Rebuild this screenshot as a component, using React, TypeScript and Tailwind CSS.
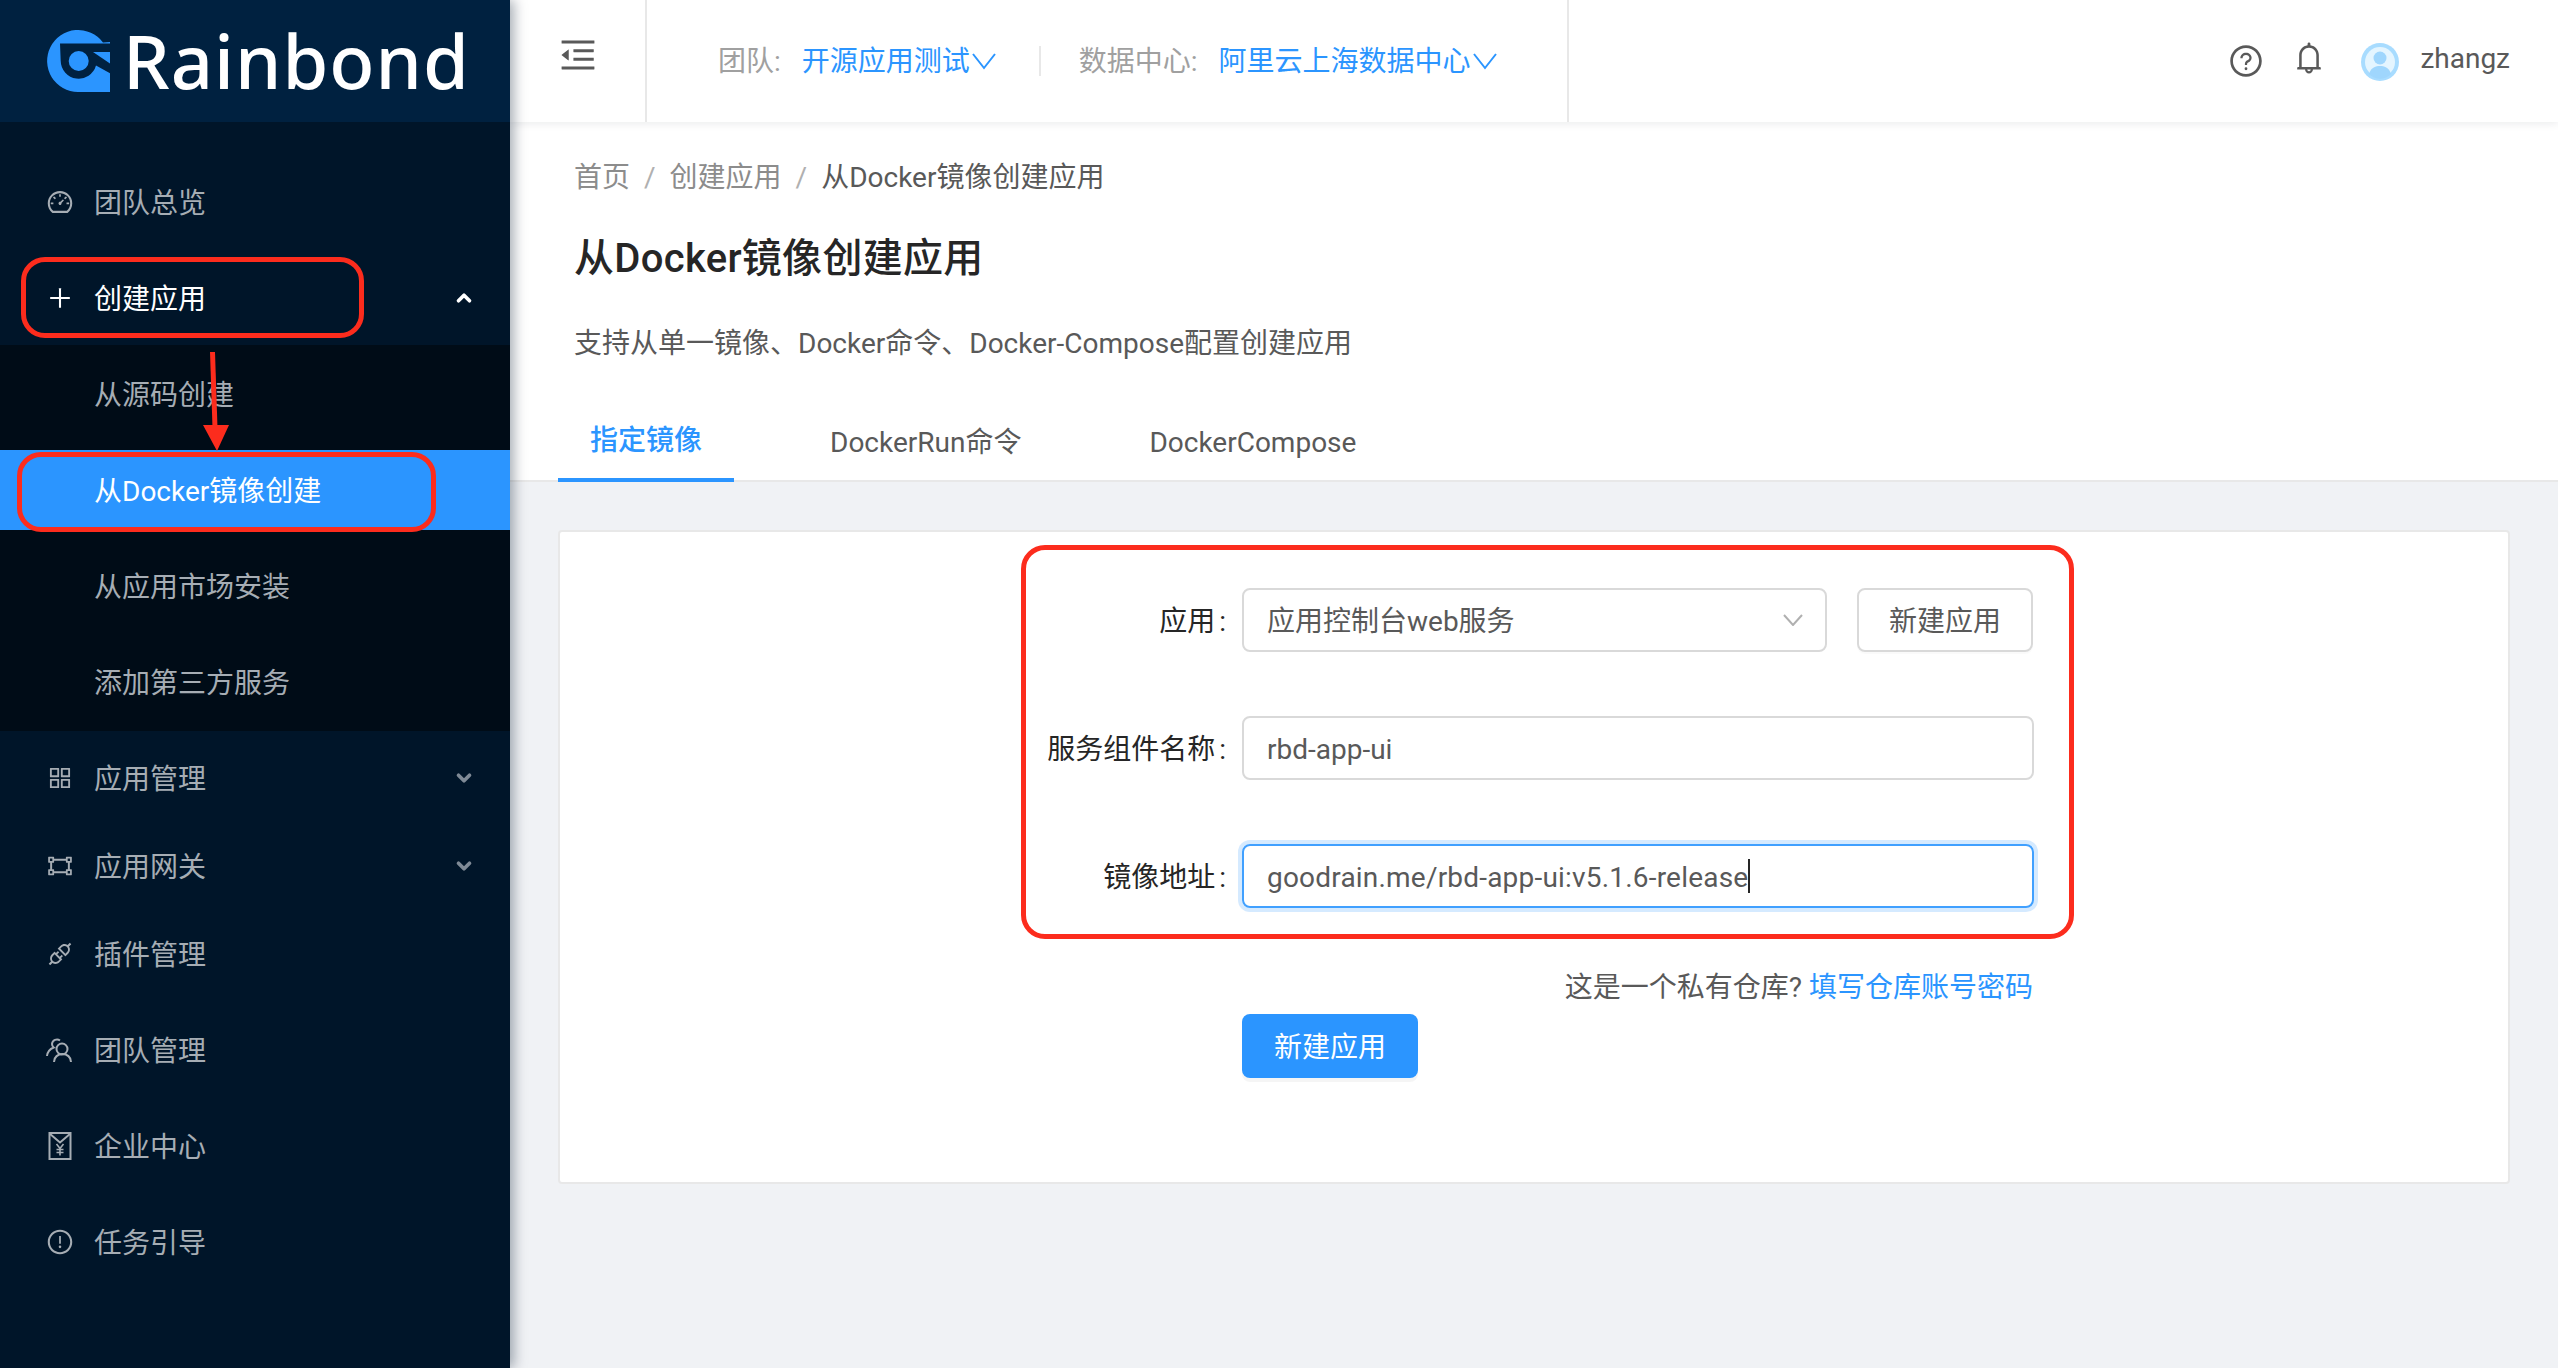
import React from 'react';
import { AiOutlineDashboard, AiOutlinePlus, AiOutlineAppstore, AiOutlineGateway, AiOutlineApi, AiOutlineExclamationCircle, AiOutlineQuestionCircle, AiOutlineBell, AiOutlineMenuFold } from 'react-icons/ai';
import { FiChevronDown, FiChevronUp } from 'react-icons/fi';

const Logo = () => (
  <svg width="63" height="62" viewBox="0 0 63 62" className="shrink-0">
    <path d="M56 12.5A31 31 0 1 0 31 62H63V12Z" fill="#2b95ff" />
    <path d="M13 13.5H63V43.3L49 35.6A18 18 0 0 1 13.7 31Z" fill="#002140" />
    <path d="M46 22H63V33.5Z" fill="#2b95ff" />
    <circle cx="31.7" cy="31" r="10" fill="#2b95ff" />
  </svg>
);

const TeamIcon = () => (
  <svg width="28" height="28" viewBox="0 0 28 28" fill="none" stroke="currentColor" strokeWidth="2">
    <circle cx="16" cy="13" r="5.5" />
    <path d="M8 26c0-5 4-8 8.5-8s8.5 3 8.5 8" />
    <path d="M14 4.5A5 5 0 0 0 6 8c0 1.5.7 2.7 1.7 3.5C4 13 1.5 15.5 1 20" />
  </svg>
);

const EnterpriseIcon = () => (
  <svg width="28" height="28" viewBox="0 0 28 28" fill="none" stroke="currentColor" strokeWidth="2">
    <path d="M3.5 1H24.5V27H3.5Z" />
    <path d="M3.5 1.5L14 10.5L24.5 1.5" />
    <path d="M10.5 12L14 16.5L17.5 12M14 16.5V23.5M10.5 17.5H17.5M10.5 20.5H17.5" strokeWidth="1.6" />
  </svg>
);

const NavItem = ({ icon, label, arrow, active }: { icon: React.ReactNode; label: string; arrow?: 'up' | 'down'; active?: boolean }) => (
  <div className={`flex items-center h-[80px] pl-[46px] pr-[35px] ${active ? 'text-white' : 'text-[#a6adb4]'}`}>
    <span className="w-[28px] flex justify-center text-[34px]">{icon}</span>
    <span className="ml-[20px] flex-1 pt-[3px]">{label}</span>
    {arrow === 'up' && <FiChevronUp className="text-[22px] stroke-[4]" />}
    {arrow === 'down' && <FiChevronDown className="text-[22px] stroke-[4] text-[#7f8a96]" />}
  </div>
);

const SubItem = ({ label, selected }: { label: string; selected?: boolean }) => (
  <div className={`flex items-center h-[80px] pl-[94px] pt-[3px] ${selected ? 'bg-[#2b95ff] text-white' : 'text-[#a6adb4]'}`}>{label}</div>
);

const Select = () => (
  <div className="w-[585px] h-[64px] border-2 border-[#d9d9d9] rounded-[8px] flex items-center justify-between pl-[23px] pr-[22px] text-[#595959]">
    <span className="pt-[3px]">应用控制台web服务</span>
    <svg width="20" height="12" viewBox="0 0 20 12" fill="none" stroke="#b0b0b0" strokeWidth="2"><path d="M1 1l9 10 9-10" /></svg>
  </div>
);

const FormRow = ({ label, children }: { label: string; children: React.ReactNode }) => (
  <div className="flex items-center h-[64px] mb-[64px]">
    <div className="w-[682px] text-right pr-[16px] pt-[3px] text-[#262626]">{label}<span className="ml-[4px]">:</span></div>
    {children}
  </div>
);

export default function App() {
  return (
    <div className="relative flex h-[1368px] w-[2558px] overflow-hidden bg-[#f0f2f5] text-[28px] font-['Roboto','Noto_Sans_CJK_SC',sans-serif]">
      <aside className="w-[510px] shrink-0 bg-[#001529] shadow-[4px_0_12px_rgba(0,21,41,0.35)] z-10">
        <div className="h-[122px] bg-[#002140] flex items-center pl-[47px]">
          <Logo />
          <span className="ml-[13px] text-white text-[74px] leading-none font-medium tracking-[1px] font-['Noto_Sans',sans-serif]">Rainbond</span>
        </div>
        <div className="pt-[40px]">
          <NavItem icon={<AiOutlineDashboard />} label="团队总览" />
          <div className="h-[16px]" />
          <NavItem icon={<AiOutlinePlus />} label="创建应用" arrow="up" active />
          <div className="mt-[7px] mb-[7px] bg-[#000c17] pt-[9px] pb-[9px] flex flex-col gap-[16px]">
            <SubItem label="从源码创建" />
            <SubItem label="从Docker镜像创建" selected />
            <SubItem label="从应用市场安装" />
            <SubItem label="添加第三方服务" />
          </div>
          <NavItem icon={<AiOutlineAppstore />} label="应用管理" arrow="down" />
          <div className="h-[8px]" />
          <NavItem icon={<AiOutlineGateway />} label="应用网关" arrow="down" />
          <div className="h-[8px]" />
          <NavItem icon={<AiOutlineApi />} label="插件管理" />
          <div className="h-[16px]" />
          <NavItem icon={<TeamIcon />} label="团队管理" />
          <div className="h-[16px]" />
          <NavItem icon={<EnterpriseIcon />} label="企业中心" />
          <div className="h-[16px]" />
          <NavItem icon={<AiOutlineExclamationCircle />} label="任务引导" />
        </div>
      </aside>

      <div className="flex-1 flex flex-col min-w-0">
        <header className="h-[122px] bg-white shadow-[0_2px_8px_rgba(0,21,41,0.08)] flex items-stretch z-[1]">
          <div className="w-[137px] flex items-center justify-center border-r-2 border-[#e8e8e8] pb-[13px]">
            <AiOutlineMenuFold className="text-[42px] text-[#595959]" />
          </div>
          <div className="w-[922px] border-r-2 border-[#e8e8e8] flex items-center pl-[71px]">
            <span className="text-[#a0a0a0] pt-[2px]">团队:</span>
            <span className="ml-[21px] text-[#2b95ff] pt-[2px]">开源应用测试</span>
            <svg width="24" height="20" viewBox="0 0 24 20" fill="none" stroke="#2b95ff" strokeWidth="2" className="ml-[2px]"><path d="M1 3l11 14L23 3" /></svg>
            <div className="ml-[43px] h-[30px] w-[2px] bg-[#e8e8e8]" />
            <span className="ml-[38px] text-[#a0a0a0] pt-[2px]">数据中心:</span>
            <span className="ml-[21px] text-[#2b95ff] pt-[2px]">阿里云上海数据中心</span>
            <svg width="24" height="20" viewBox="0 0 24 20" fill="none" stroke="#2b95ff" strokeWidth="2" className="ml-[2px]"><path d="M1 3l11 14L23 3" /></svg>
          </div>
          <div className="flex-1 flex items-center justify-end pr-[48px] text-[#595959]">
            <AiOutlineQuestionCircle className="text-[36px]" />
            <AiOutlineBell className="ml-[27px] mb-[6px] text-[36px]" />
            <svg width="38" height="38" viewBox="0 0 38 38" className="ml-[34px] mt-[2px]">
              <circle cx="19" cy="19" r="19" fill="#a8dcff" />
              <circle cx="19" cy="19" r="15" fill="#e4f5ff" />
              <circle cx="19" cy="15" r="6.5" fill="#9fd6fd" />
              <path d="M8 31c2-7 7-8 11-8s9 1 11 8a15 15 0 0 1-22 0z" fill="#9fd6fd" />
            </svg>
            <span className="ml-[21px] mb-[4px]">zhangz</span>
          </div>
        </header>

        <section className="h-[360px] bg-white border-b-2 border-[#e8e8e8] flex flex-col pl-[64px]">
          <div className="mt-[36px] flex items-center h-[40px] text-[#8c8c8c]">
            <span>首页</span>
            <span className="mx-[14px] text-[#b0b0b0]">/</span>
            <span>创建应用</span>
            <span className="mx-[14px] text-[#b0b0b0]">/</span>
            <span className="text-[#595959]">从Docker镜像创建应用</span>
          </div>
          <h1 className="mt-[37px] text-[40px] leading-[48px] font-medium tracking-[0.3px] text-[#262626]">从Docker镜像创建应用</h1>
          <p className="mt-[41px] h-[40px] leading-[40px] text-[#595959]">支持从单一镜像、Docker命令、Docker-Compose配置创建应用</p>
          <nav className="mt-[auto] -ml-[16px] flex h-[78px] -mb-[2px]">
            <div className="w-[176px] flex items-center justify-center text-[#2b95ff] font-medium border-b-4 border-[#2b95ff]">指定镜像</div>
            <div className="ml-[96px] flex items-center text-[#595959]">DockerRun命令</div>
            <div className="ml-[128px] flex items-center text-[#595959]">DockerCompose</div>
          </nav>
        </section>

        <main className="flex-1 pl-[48px] pr-[48px] pt-[48px]">
          <div className="h-[654px] bg-white border-2 border-[#e8e8e8] rounded-[4px] pt-[56px]">
            <FormRow label="应用">
              <Select />
              <div className="ml-[30px] w-[176px] h-[64px] pt-[3px] border-2 border-[#d9d9d9] rounded-[8px] flex items-center justify-center text-[#595959] shadow-[0_2px_0_rgba(0,0,0,0.02)]">新建应用</div>
            </FormRow>
            <FormRow label="服务组件名称">
              <div className="w-[792px] h-[64px] pt-[3px] border-2 border-[#d9d9d9] rounded-[8px] flex items-center pl-[23px] text-[#595959]">rbd-app-ui</div>
            </FormRow>
            <FormRow label="镜像地址">
              <div className="w-[792px] h-[64px] border-2 border-[#40a0ff] rounded-[8px] shadow-[0_0_0_4px_rgba(43,149,255,0.2)] flex items-center pl-[23px] text-[#595959]">
                <span className="pt-[3px] tracking-[0.2px]">goodrain.me/rbd-app-ui:v5.1.6-release</span><span className="w-[2px] h-[34px] bg-[#262626]" />
              </div>
            </FormRow>
            <div className="-mt-[6px] pt-[2px] w-[1473px] h-[40px] leading-[40px] text-right text-[#595959]">
              这是一个私有仓库? <span className="text-[#2b95ff]">填写仓库账号密码</span>
            </div>
            <div className="mt-[8px] ml-[682px] w-[176px] h-[64px] pt-[3px] bg-[#2b95ff] rounded-[8px] flex items-center justify-center text-white shadow-[0_4px_0_rgba(0,0,0,0.04)]">新建应用</div>
          </div>
        </main>
      </div>

      {/* red annotations drawn over the screenshot */}
      <div className="absolute z-20 left-[21px] top-[257px] w-[343px] h-[81px] border-[5px] border-[#fc2c1d] rounded-[24px]" />
      <div className="absolute z-20 left-[17px] top-[452px] w-[419px] h-[80px] border-[5px] border-[#fc2c1d] rounded-[24px]" />
      <div className="absolute z-20 left-[1021px] top-[545px] w-[1053px] h-[394px] border-[5px] border-[#fc2c1d] rounded-[24px]" />
      <svg className="absolute z-20 left-[200px] top-[350px]" width="32" height="102" viewBox="0 0 32 102">
        <path d="M12.5 2 L15 78" stroke="#fc2c1d" strokeWidth="5" fill="none" />
        <path d="M3 75 H29 L17 101 Z" fill="#fc2c1d" />
      </svg>
    </div>
  );
}
